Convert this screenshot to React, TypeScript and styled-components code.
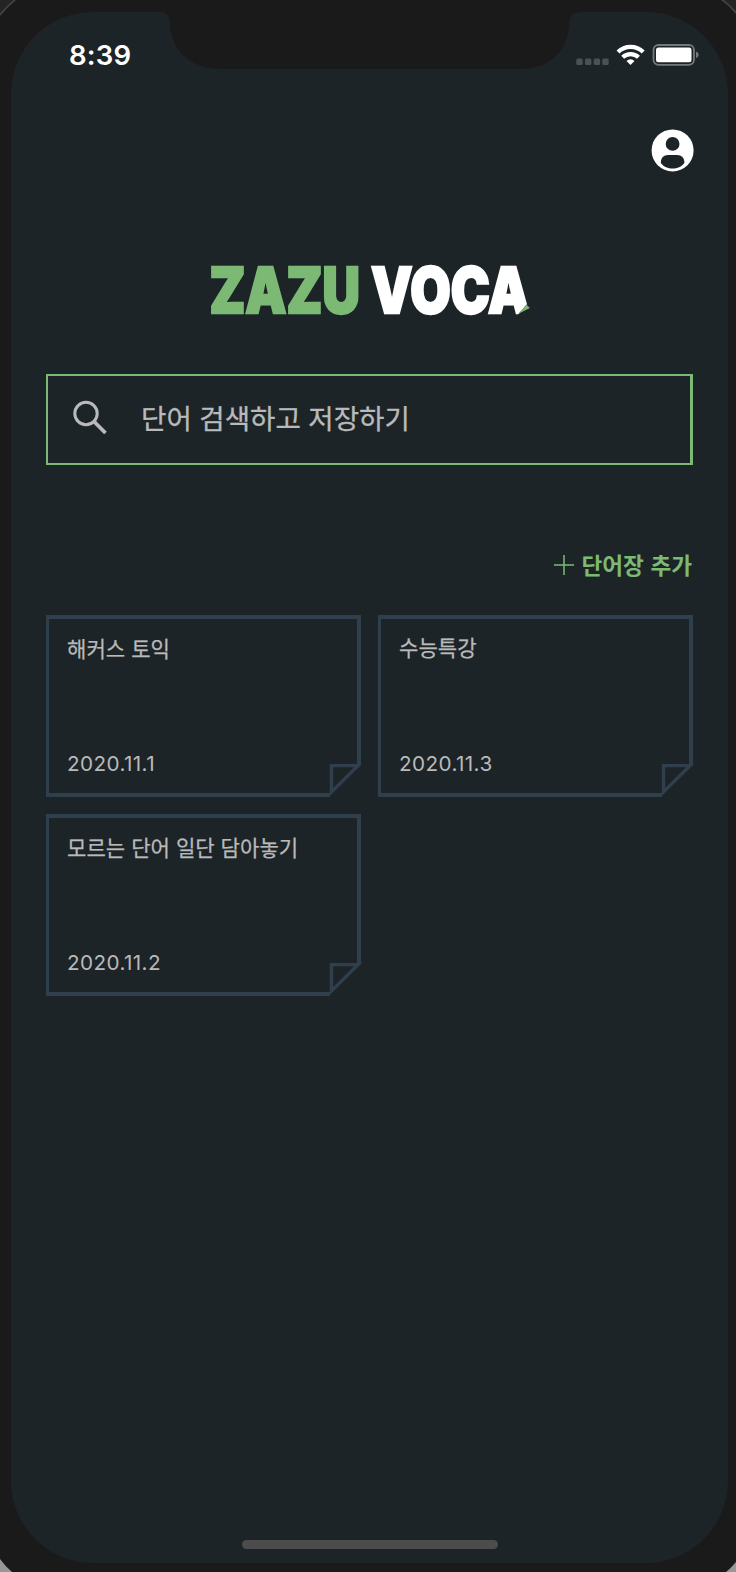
import React from "react";
import styled, { createGlobalStyle } from "styled-components";

const color = {
  bezel: "#1a1a1a",
  screen: "#1d2427",
  green: "#7cb974",
  line: "#2f3f4b",
  text: "#b9babb",
};

const hangul = '"Noto Sans CJK KR", sans-serif';

const GlobalStyle = createGlobalStyle`
  *, *::before, *::after { box-sizing: border-box; }
  body { margin: 0; background: ${color.bezel}; overflow: hidden; }
  button { border: 0; background: none; padding: 0; margin: 0; }
  svg { display: block; flex: none; overflow: visible; }
`;

const Device = styled.div`
  position: relative;
  width: 736px;
  height: 1572px;
  padding: 12px 8px 9px 11px;
  background: ${color.bezel};
  overflow: hidden;
`;

const Corners = styled.svg`
  position: absolute;
  inset: 0;
`;

const Screen = styled.main`
  position: relative;
  display: flex;
  flex-direction: column;
  height: 1551px;
  padding: 0 35px;
  background: ${color.screen};
  border-radius: 82px;
`;

const Notch = styled.svg`
  position: absolute;
  top: 0;
  left: 149px;
`;

const StatusBar = styled.header`
  display: flex;
  justify-content: space-between;
  height: 86px;
  padding: 0 0 0 23px;
`;

const Time = styled.time`
  margin-top: 24px;
  font: 600 27.5px/38px Inter, sans-serif;
  letter-spacing: 0.2px;
  color: #fff;
`;

const StatusIcons = styled.svg`
  margin: 30px -5px 0 0;
`;

const ProfileRow = styled.div`
  display: flex;
  justify-content: flex-end;
  margin: 32px -1px 0 0;
`;

const Logo = styled.h1`
  display: flex;
  justify-content: center;
  margin: 75px 0 0;
  height: 86px;
`;

const SearchBox = styled.button`
  display: flex;
  align-items: center;
  gap: 33px;
  height: 91px;
  margin-top: 41px;
  padding: 0 0 5px 25px;
  border: 2px solid ${color.green};
  border-right-width: 3px;
  font: 400 27.6px/40px ${hangul};
  word-spacing: 1.3px;
  color: ${color.text};
  -webkit-text-stroke: 0.3px ${color.text};
`;

const AddButton = styled.button`
  display: flex;
  align-items: center;
  align-self: flex-end;
  gap: 7px;
  height: 34px;
  margin: 83px 1px 0 0;
  font: 700 22.6px/34px ${hangul};
  word-spacing: 1.5px;
  color: ${color.green};
`;

const CardGrid = styled.section`
  display: grid;
  grid-template-columns: 315px 315px;
  grid-auto-rows: 182px;
  gap: 17px;
  margin-top: 33px;
`;

const Card = styled.article`
  position: relative;
  display: flex;
  flex-direction: column;
  justify-content: space-between;
  padding: 13px 17px 15px 18px;
  border: 4px solid ${color.line};
  border-left-width: 3px;
`;

const CardTitle = styled.h2<{ $lift?: boolean }>`
  margin: ${(p) => (p.$lift ? "-1px" : "0")} 0 0;
  font: 400 21.1px/32px ${hangul};
  word-spacing: 1.2px;
  color: ${color.text};
  -webkit-text-stroke: 0.25px ${color.text};
`;

const CardDate = styled.time`
  font: 400 20.7px/28px Inter, sans-serif;
  letter-spacing: 0.4px;
  color: ${color.text};
`;

const Fold = styled.svg`
  position: absolute;
  right: -5px;
  bottom: -4px;
`;

const HomeIndicator = styled.div`
  width: 256px;
  height: 9px;
  margin: auto auto 14px;
  border-radius: 5px;
  background: #4c4c4c;
`;

const decks = [
  { title: "해커스 토익", date: "2020.11.1" },
  { title: "수능특강", date: "2020.11.3", lift: true },
  { title: "모르는 단어 일단 담아놓기", date: "2020.11.2" },
];

export default function App() {
  return (
    <>
      <GlobalStyle />
      <Device>
        <Corners width="736" height="1572">
          <path d="M0 0H15Q7 6 0 15Z" fill="#242426" />
          <path d="M16 -1Q7 6 -1 16" fill="none" stroke="#464646" strokeWidth="1.5" />
          <path d="M722 0H736V13Q730 5 722 0Z" fill="#242426" />
          <path d="M721 -1Q730 5 737 14" fill="none" stroke="#464646" strokeWidth="1.5" />
          <path d="M0 1559Q5 1566 12 1572H0Z" fill="#979797" />
          <path d="M736 1562Q731 1568 726 1572H736Z" fill="#979797" />
        </Corners>
        <Screen>
          <Notch width="424" height="58" viewBox="0 0 424 58">
            <path d="M0 0H424Q410 0 409.500 9C409 37 392 57 359 57H61C29 57 11 37 10 12Q10 0 0 0Z" fill={color.bezel} />
          </Notch>
          <StatusBar>
            <Time>8:39</Time>
            <StatusIcons width="124" height="28" viewBox="574 42 124 28">
              {[576.3, 585, 593.7, 602.3].map((x) => (
                <rect key={x} x={x} y="58.600" width="6.400" height="6.400" rx="1.500" fill="#4c5254" />
              ))}
              <g fill="none" stroke="#fff" strokeWidth="4.200">
                <path d="M618 52a18 18 0 0 1 25.200 0" />
                <path d="M622.700 57.300a11.500 11.500 0 0 1 15.800 0" />
              </g>
              <path d="M626.500 60.900a6 6 0 0 1 8 0L630.500 65Z" fill="#fff" />
              <rect x="653.500" y="45" width="40.500" height="19.800" rx="5" fill="none" stroke="#74797b" strokeWidth="1.800" />
              <rect x="656" y="47.500" width="35.500" height="14.800" rx="2.500" fill="#fff" />
              <path d="M696 51.500q2.700 1 2.700 3.300t-2.700 3.300z" fill="#74797b" />
            </StatusIcons>
          </StatusBar>
          <ProfileRow>
            <svg width="42" height="42" viewBox="0.400 0.600 42 42">
              <circle cx="21" cy="21" r="21" fill="#fff" />
              <circle cx="21" cy="14.500" r="6.900" fill={color.screen} />
              <path d="M9.200 33.500C9.200 28.500 12 25.700 16.500 25.700H25.500C30 25.700 32.800 28.500 32.800 33.500C30 37.300 25.500 39 21 39S12 37.300 9.200 33.500Z" fill={color.screen} />
            </svg>
          </ProfileRow>
          <Logo>
            <svg width="330" height="86" viewBox="204 246 330 86" fontFamily="Inter, sans-serif" fontWeight="900" fontSize="63" strokeWidth="2.4">
              <g transform="translate(208.400 311.500) scale(0.8 1)">
                <text textLength="188" lengthAdjust="spacingAndGlyphs" fill={color.green} stroke={color.green}>ZAZU</text>
              </g>
              <g transform="translate(370 311.500) scale(0.8 1)">
                <text textLength="198" lengthAdjust="spacingAndGlyphs" fill="#fff" stroke="#fff">VOCA</text>
              </g>
              <path d="M516 315L525.500 303.500L531 306V316Z" fill={color.screen} />
              <path d="M517 313L525.500 303.800L528.800 307Z" fill={color.green} />
            </svg>
          </Logo>
          <SearchBox>
            <svg width="35" height="35" viewBox="0 0 35 35" fill="none" stroke={color.text} strokeWidth="3">
              <circle cx="13" cy="13.500" r="11.200" />
              <path d="M21 21.500L32.500 33" strokeWidth="3.800" />
            </svg>
            <span>단어 검색하고 저장하기</span>
          </SearchBox>
          <AddButton>
            <svg width="20" height="20" viewBox="0 0 20 20" stroke={color.green} strokeWidth="1.500">
              <path d="M10 0V20M0 10H20" />
            </svg>
            <span>단어장 추가</span>
          </AddButton>
          <CardGrid>
            {decks.map((deck) => (
              <Card key={deck.title}>
                <CardTitle $lift={deck.lift}>{deck.title}</CardTitle>
                <CardDate>{deck.date}</CardDate>
                <Fold width="33" height="34" viewBox="0 0 33 34">
                  <path d="M1 2H33V34H1Z" fill={color.screen} />
                  <path d="M2.500 29V2.600H29Z" fill="none" stroke={color.line} strokeWidth="3.400" />
                </Fold>
              </Card>
            ))}
          </CardGrid>
          <HomeIndicator />
        </Screen>
      </Device>
    </>
  );
}
